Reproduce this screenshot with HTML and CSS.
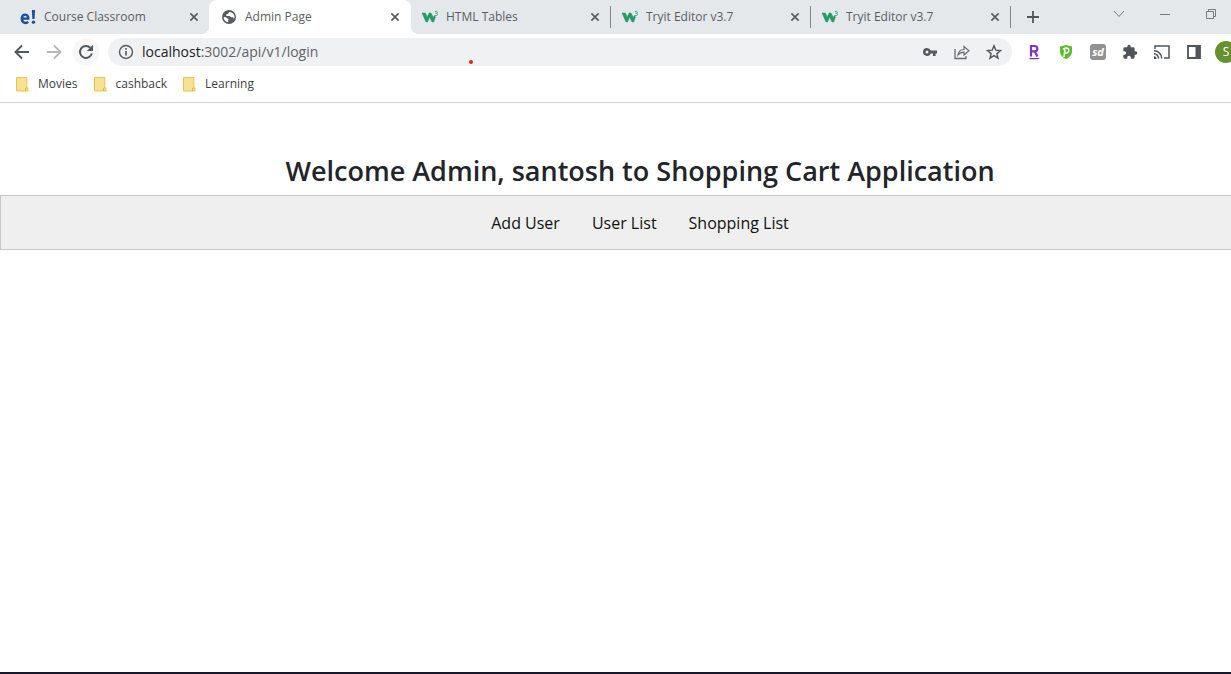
FILE: index.html
```html
<!DOCTYPE html>
<html lang="en">
<head>
<meta charset="utf-8">
<title>Admin Page</title>
<link rel="stylesheet" href="styles.css">
</head>
<body>
<svg class="defs" aria-hidden="true">
  <symbol id="close" viewBox="0 0 10 10"><path d="M1.400 1.400l7.200 7.200M8.600 1.400L1.400 8.600" stroke="#55595e" stroke-width="1.600"/></symbol>
  <symbol id="w3" viewBox="0 0 16 12"><path d="M0 2h3.300l2 4L7 2h2l2.300 4.600.9-2 1.300 1.200L11.700 11H10L7.700 6.300 5.500 11H4z" fill="#259b67" stroke="#259b67" stroke-width=".5"/><path d="M12.800.5h1.600c1.400 0 1.400 1.800 0 1.800h-1M14.400 2.300c1.500 0 1.500 2.200 0 2.200h-1.600" fill="none" stroke="#3fa87c" stroke-width=".9"/></symbol>
  <symbol id="folder" viewBox="0 0 13 15"><path d="M.5.5h10.300v10l1.200.8v2.700H.500z" fill="#f7e194" stroke="#ebc349"/><path d="M9.500 14v-2.500l1.500-.8" fill="none" stroke="#e3b52f"/></symbol>
</svg>
<div class="window">
  <header class="browser">
    <div class="tabs">
      <div class="tab first">
        <svg class="fav" viewBox="0 0 17 17"><path d="M1.800 10.200h7c.3-5.600-6.500-5.600-6.900-.3-.2 5.200 4.500 5.800 6.900 3.800" fill="none" stroke="#1b4f9c" stroke-width="2.500"/><path d="M12.600 1h3.400l-.5 9.500h-2.400z" fill="#1b4f9c"/><circle cx="14.300" cy="14" r="1.800" fill="#1b4f9c"/></svg>
        <span class="title">Course Classroom</span>
        <button class="close" aria-label="Close tab"><svg><use href="#close"/></svg></button>
      </div>
      <div class="tab active">
        <svg class="fav" viewBox="0 0 24 24"><circle cx="12" cy="12" r="10.500" fill="#575b60"/><path d="M4 12c2 0 4 .2 5 2l2 .5v5.300C7 19.500 4 16 4 12zM12 4.500l-1 2.500-3 1v2.500h5l2 2h3c1 .5 1.500 2 1 3.200C22 12 20 5 12 4.500z" fill="#fff"/></svg>
        <span class="title">Admin Page</span>
        <button class="close" aria-label="Close tab"><svg><use href="#close"/></svg></button>
      </div>
      <div class="tab">
        <svg class="fav w3"><use href="#w3"/></svg>
        <span class="title">HTML Tables</span>
        <button class="close" aria-label="Close tab"><svg><use href="#close"/></svg></button>
      </div>
      <div class="tab">
        <svg class="fav w3"><use href="#w3"/></svg>
        <span class="title">Tryit Editor v3.7</span>
        <button class="close" aria-label="Close tab"><svg><use href="#close"/></svg></button>
      </div>
      <div class="tab">
        <svg class="fav w3"><use href="#w3"/></svg>
        <span class="title">Tryit Editor v3.7</span>
        <button class="close" aria-label="Close tab"><svg><use href="#close"/></svg></button>
      </div>
      <button class="newtab" aria-label="New tab"><svg width="14" height="14" viewBox="0 0 14 14"><path d="M7 1v12M1 7h12" stroke="#50545a" stroke-width="1.800"/></svg></button>
      <div class="controls">
        <button aria-label="Search tabs"><svg width="12" height="8" viewBox="0 0 12 8"><path d="M1 1l5 5.500L11 1" fill="none" stroke="#777a7e"/></svg></button>
        <button aria-label="Minimize"><svg width="10" height="10" viewBox="0 0 10 10"><path d="M0 5.500h10" stroke="#777a7e"/></svg></button>
        <button aria-label="Restore"><svg width="10" height="10" viewBox="0 0 10 10"><path d="M.5 2.500h7v7h-7zM2.500 2.500v-2h7v7h-2" fill="none" stroke="#777a7e"/></svg></button>
      </div>
    </div>

    <div class="toolbar">
      <button class="tool" aria-label="Back"><svg width="16" height="16" viewBox="0 0 16 16"><path d="M15 8H2M8 1.500L1.500 8 8 14.500" fill="none" stroke="#54585d" stroke-width="1.900"/></svg></button>
      <button class="tool" aria-label="Forward"><svg width="16" height="16" viewBox="0 0 16 16"><path d="M1 8h13M8 1.500L14.500 8 8 14.500" fill="none" stroke="#b6b8ba" stroke-width="1.800"/></svg></button>
      <button class="tool reload" aria-label="Reload"><svg width="16" height="16" viewBox="0 0 16 16"><path d="M13.800 9.500A6 6 0 1 1 12.300 3.700" fill="none" stroke="#54585d" stroke-width="2"/><path d="M15 .8v6.200H8.800z" fill="#54585d"/></svg></button>
      <div class="omnibox">
        <button class="info" aria-label="Site information"><svg width="16" height="16" viewBox="0 0 16 16"><circle cx="8" cy="8" r="6.500" fill="none" stroke="#55595e" stroke-width="1.400"/><path d="M8 7v4.500M8 4v1.700" stroke="#55595e" stroke-width="1.600"/></svg></button>
        <a class="url" href="#"><b>localhost</b>:3002/api/v1/login</a>
        <button class="tool" aria-label="Passwords"><svg width="14" height="10" viewBox="0 0 14 10"><path d="M4 1a4 4 0 1 0 3.700 5.500H10V9h2.600V6.500H14V3.500H7.700A4 4 0 0 0 4 1zm0 2.500a1.500 1.500 0 1 1 0 3 1.500 1.500 0 0 1 0-3z" fill="#55595e" fill-rule="evenodd"/></svg></button>
        <button class="tool" aria-label="Share"><svg width="16" height="16" viewBox="0 0 16 16"><path d="M1 5v9.500h11V12" fill="none" stroke="#696d72" stroke-width="1.300"/><path d="M4 11c.5-4 2.500-5.500 6-5.500V2.500l5 4.300-5 4.200V8.200C7.200 8.200 5.500 9 4 11z" fill="none" stroke="#696d72" stroke-width="1.200"/></svg></button>
        <button class="tool" aria-label="Bookmark this page"><svg width="16" height="16" viewBox="0 0 16 16"><path d="M8 1.700l1.800 4.400 4.700.4-3.600 3.100 1.100 4.600L8 11.700l-4 2.500 1.100-4.600-3.600-3.100 4.700-.4z" fill="none" stroke="#54585d" stroke-width="1.400"/></svg></button>
      </div>
      <button class="tool" aria-label="Rewards"><svg width="14" height="16" viewBox="0 0 14 16"><path d="M4 12.500V2h3.500c3.800 0 3.800 5.300 0 5.300H4M7.500 7.300l3 5.200" fill="none" stroke="#7b35ca" stroke-width="2.200"/><path d="M2 13.900h11l-2 1.400H3z" fill="#7b35ca"/></svg></button>
      <button class="tool" aria-label="Shield"><svg width="14" height="16" viewBox="0 0 14 16"><path d="M1 2.500L7 1l6 1.500V7c0 4-2.500 6.500-6 8-3.500-1.500-6-4-6-8z" fill="#5bbd2c"/><path d="M5 13l1-7.500M5.500 8.500C7 10 9.800 8.800 9.800 6.200S7 3.200 4 5.300" fill="none" stroke="#fff" stroke-width="1.600"/></svg></button>
      <button class="tool sd" aria-label="sd extension"><span>sd</span></button>
      <button class="tool" aria-label="Extensions"><svg width="16" height="16" viewBox="0 0 24 24"><path d="M20.500 11H19V7a2 2 0 0 0-2-2h-4V3.500a2.500 2.500 0 0 0-5 0V5H4a2 2 0 0 0-2 2v3.800h1.500a2.700 2.700 0 0 1 0 5.400H2V20a2 2 0 0 0 2 2h3.800v-1.500a2.700 2.700 0 0 1 5.400 0V22H17a2 2 0 0 0 2-2v-4h1.500a2.500 2.500 0 0 0 0-5z" fill="#50545a"/></svg></button>
      <button class="tool" aria-label="Cast"><svg width="16" height="14" viewBox="0 0 16 14"><path d="M1 4V1h14v12h-5M0 5.700A7.500 7.500 0 0 1 7.600 13.500M0 8.800A4.600 4.600 0 0 1 4.600 13.500" fill="none" stroke="#50545a" stroke-width="1.500"/><path d="M0 11.200A2.500 2.500 0 0 1 2.500 14H0z" fill="#50545a"/></svg></button>
      <button class="tool" aria-label="Side panel"><svg width="14" height="14" viewBox="0 0 14 14"><path d="M1 1h12v12H1z" fill="none" stroke="#50545a" stroke-width="1.800"/><path d="M8.500 1H13v12H8.500z" fill="#50545a"/></svg></button>
      <button class="tool avatar" aria-label="Profile"><span>S</span></button>
    </div>

    <nav class="bookmarks" aria-label="Bookmarks">
      <a href="#"><svg><use href="#folder"/></svg>Movies</a>
      <a href="#"><svg><use href="#folder"/></svg>cashback</a>
      <a href="#"><svg><use href="#folder"/></svg>Learning</a>
    </nav>
    <span class="pointer"></span>
  </header>

  <main class="page">
    <h1>Welcome Admin, santosh to Shopping Cart Application</h1>
    <nav class="menu" aria-label="Main">
      <a href="#">Add User</a>
      <a href="#">User List</a>
      <a href="#">Shopping List</a>
    </nav>
  </main>
</div>
</body>
</html>
```
FILE: styles.css
```css
* { box-sizing: border-box; }
body {
  margin: 0;
  font-family: "Open Sans", "Noto Sans", sans-serif;
  color: #212529;
}
button {
  display: flex;
  align-items: center;
  justify-content: center;
  padding: 0;
  border: 0;
  background: none;
  font-family: inherit;
}
a { color: inherit; text-decoration: none; }
svg { display: block; flex: none; }
.defs { position: absolute; width: 0; height: 0; }
.window {
  display: flex;
  flex-direction: column;
  min-height: 100vh;
  overflow: hidden;
  background: #fff;
  border-bottom: 2px solid #17152e;
}
.browser {
  position: relative;
  border-bottom: 1px solid #dccfd8;
}

/* Tab strip */
.tabs {
  display: flex;
  height: 34px;
  margin-right: -3px;
  background: #e5e8eb;
}
.tab {
  position: relative;
  display: flex;
  align-items: center;
  flex: 0 1 200px;
  min-width: 0;
  padding: 0 10px 0 11px;
  font-size: 12px;
  line-height: 16px;
  color: #5a5e63;
}
.tab.first {
  flex-basis: 209px;
  padding-left: 20px;
}
.tab.active {
  flex-basis: 202px;
  padding: 0 11px 0 12px;
  background: #fff;
  border-radius: 8px 8px 0 0;
}
.tab.active::before,
.tab.active::after {
  content: "";
  position: absolute;
  bottom: 0;
  width: 8px;
  height: 8px;
}
.tab.active::before {
  right: 100%;
  background: radial-gradient(circle at 0 0, transparent 8px, #fff 8px);
}
.tab.active::after {
  left: 100%;
  background: radial-gradient(circle at 100% 0, transparent 8px, #fff 8px);
}
.tab:not(.first, .active) { border-right: 1px solid #85898e; border-image: linear-gradient(transparent 7px, #85898e 7px, #85898e 27px, transparent 27px) 1; }
.fav { width: 16px; height: 16px; margin-right: 8px; }
.title { flex: 1; white-space: nowrap; overflow: hidden; }
.close { width: 10px; height: 10px; }
.close svg { width: 10px; height: 10px; }
.newtab { width: 44px; height: 34px; flex: none; }
.controls { display: flex; margin-left: auto; }
.controls button { width: 46px; height: 28px; }

/* Toolbar */
.toolbar {
  display: flex;
  align-items: center;
  height: 36px;
  margin-right: -11px;
  padding-left: 6px;
}
.tool { width: 32px; height: 28px; flex: none; }
.reload { background: radial-gradient(circle, #f7f7f8 13px, transparent 14px); }
.omnibox {
  display: flex;
  align-items: center;
  flex: 1;
  height: 28px;
  margin: 0 6px;
  padding: 0 2px 0 10px;
  border-radius: 14px;
  background: #eff1f2;
}
.info { width: 16px; height: 16px; margin-right: 8px; }
.url {
  flex: 1;
  font-size: 14px;
  line-height: 20px;
  color: #5f6368;
}
.url b { font-weight: 400; color: #202124; }
.sd span {
  width: 16px;
  height: 16px;
  border-radius: 3px;
  background: #929292;
  color: #fff;
  font-size: 11px;
  font-weight: 700;
  font-style: italic;
  line-height: 15px;
}
.avatar span {
  width: 22px;
  height: 22px;
  border-radius: 50%;
  background: #67902f;
  color: #fff;
  font-size: 12px;
  line-height: 22px;
}

/* Bookmarks bar */
.bookmarks {
  display: flex;
  gap: 16px;
  height: 32px;
  padding: 0 16px 4px;
  font-size: 12px;
  line-height: 16px;
  color: #3c4043;
}
.bookmarks a { display: flex; align-items: center; gap: 9px; }
.bookmarks svg { width: 13px; height: 15px; }
.pointer {
  position: absolute;
  left: 469px;
  top: 60px;
  width: 4px;
  height: 4px;
  border-radius: 50%;
  background: #e8201c;
}

/* Page: wider than the window, so its right edge runs out of view */
.page {
  flex: 1;
  margin-right: -49px;
  padding-top: 48px;
  text-align: center;
}
h1 {
  margin: 0 0 4px;
  font-size: 27px;
  font-weight: 600;
  line-height: 40px;
}
.menu {
  display: flex;
  justify-content: center;
  gap: 32px;
  padding: 15px 15px 14px;
  border: 1px solid #c8c8c8;
  background: #efefef;
  color: #111;
  font-size: 16px;
  line-height: 24px;
}
```
